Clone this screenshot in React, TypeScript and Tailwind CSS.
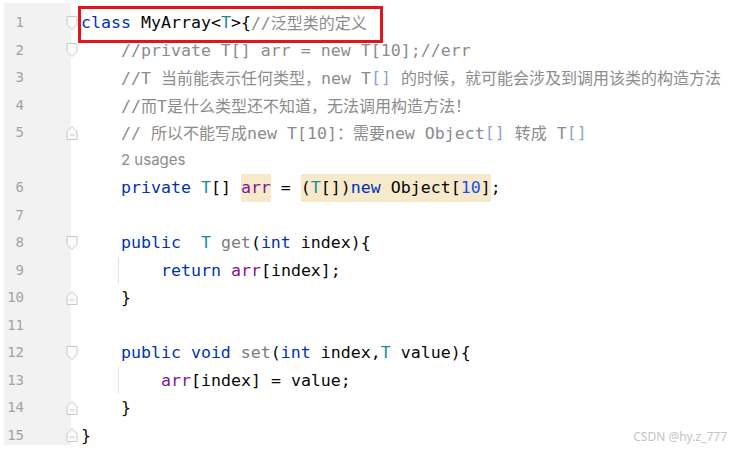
import React from "react";

type Tok = [string, string];

const K = "text-[#0033b3]";
const D = "text-[#080808]";
const TP = "text-[#1c8c99]";
const C = "text-[#8c8c8c]";
const F = "text-[#871094]";
const N = "text-[#1750eb]";
const M = "text-[#7c7c7c]";
const BR = "text-[#8ea3cf]";
const HL = "bg-[#f6eacb]";

// rows of the editor; null number = inlay row
const rows: { num: number | null; fold?: "open" | "close"; guide?: boolean; toks: Tok[] | null; usages?: boolean }[] = [
  { num: 1, fold: "open", toks: [["class ", K], ["MyArray<", D], ["T", TP], [">{", D], ["//泛型类的定义", C]] },
  { num: 2, fold: "open", toks: [["    //private T[] arr = new T[10];//err", C]] },
  { num: 3, toks: [["    //T 当前能表示任何类型，new T", C], ["[]", BR], [" 的时候，就可能会涉及到调用该类的构造方法", C]] },
  { num: 4, toks: [["    //而T是什么类型还不知道，无法调用构造方法！", C]] },
  { num: 5, fold: "close", toks: [["    // 所以不能写成new T[10]：需要new Object", C], ["[]", BR], [" 转成 T", C], ["[]", BR]] },
  { num: null, toks: null, usages: true },
  {
    num: 6,
    toks: [
      ["    ", D], ["private ", K], ["T", TP], ["[] ", D], ["arr", F + " " + HL], [" = ", D],
      ["(", D + " " + HL], ["T", TP + " " + HL], ["[])", D + " " + HL], ["new", K + " " + HL], [" Object[", D + " " + HL], ["10", N + " " + HL], ["]", D + " " + HL], [";", D],
    ],
  },
  { num: 7, toks: [] },
  { num: 8, fold: "open", toks: [["    ", D], ["public  ", K], ["T ", TP], ["get", M], ["(", D], ["int ", K], ["index){", D]] },
  { num: 9, guide: true, toks: [["return ", K], ["arr", F], ["[index];", D]] },
  { num: 10, fold: "close", toks: [["    }", D]] },
  { num: 11, toks: [] },
  { num: 12, fold: "open", toks: [["    ", D], ["public void ", K], ["set", M], ["(", D], ["int ", K], ["index,", D], ["T ", TP], ["value){", D]] },
  { num: 13, guide: true, toks: [["arr", F], ["[index] = value;", D]] },
  { num: 14, fold: "close", toks: [["    }", D]] },
  { num: 15, fold: "close", toks: [["}", D]] },
];

const Txt = ({ text }: { text: string }) => {
  const parts = text.split(/([\u3000-\u303f\u4e00-\u9fff\uff00-\uffef]+)/);
  return (
    <>
      {parts.map((p, i) =>
        i % 2 === 1 ? (
          <span key={i} className="text-[16px] font-['Noto_Sans_CJK_SC',sans-serif]">
            {p}
          </span>
        ) : (
          <React.Fragment key={i}>{p}</React.Fragment>
        )
      )}
    </>
  );
};

const Tokens = ({ toks }: { toks: Tok[] }) => (
  <>
    {toks.map(([t, c], j) => (
      <span key={j} className={"inline-block h-[27.5px] align-top leading-[27.5px] " + c}>
        <Txt text={t} />
      </span>
    ))}
  </>
);

const FoldIcon = ({ kind }: { kind: "open" | "close" }) =>
  kind === "open" ? (
    <svg width="12" height="16" viewBox="0 0 12 16">
      <path d="M1 1.5 H11 V9.5 L6 14.5 L1 9.5 Z" fill="#fbfbfb" stroke="#c8c8c8" strokeWidth="1" />
    </svg>
  ) : (
    <svg width="12" height="16" viewBox="0 0 12 16">
      <path d="M1 14.5 H11 V6.5 L6 1.5 L1 6.5 Z" fill="#fbfbfb" stroke="#c8c8c8" strokeWidth="1" />
      <path d="M3.5 10 H8.5" stroke="#c8c8c8" strokeWidth="1" />
    </svg>
  );

export default function App() {
  return (
    <div className="relative w-[739px] h-[451px] bg-white overflow-hidden">
      <div className="flex pt-[3px] pl-[4px]">
        {/* gutter with line numbers */}
        <div className="w-[67px] h-[442px] bg-[#f2f2f2] pt-[6px] pr-[47px] font-['DejaVu_Sans_Mono',monospace] text-[14px] text-[#a3a3a3]">
          {rows.map((r, i) => (
            <div key={i} className="h-[27.5px] flex items-center justify-end">
              {r.num ?? ""}
            </div>
          ))}
        </div>

        {/* fold markers */}
        <div className="w-[12px] -ml-[5px] pt-[6px]">
          {rows.map((r, i) => (
            <div key={i} className="h-[27.5px] flex items-center">
              {r.fold && <FoldIcon kind={r.fold} />}
            </div>
          ))}
        </div>

        {/* code */}
        <div className="ml-[3px] pt-[6px] font-['DejaVu_Sans_Mono',monospace] text-[16.6px] whitespace-pre">
          {rows.map((r, i) =>
            r.usages ? (
              <div key={i} className="h-[27.5px] flex items-center pl-[40px] font-['Inter',sans-serif] text-[15px] text-[#8c8c8c]">
                2 usages
              </div>
            ) : r.guide ? (
              <div key={i} className="h-[27.5px] flex">
                <div className="w-[37px]" />
                <div className="h-full border-l border-[#e2e2e2] pl-[42px]">
                  <Tokens toks={r.toks!} />
                </div>
              </div>
            ) : (
              <div key={i} className="h-[27.5px]">
                <Tokens toks={r.toks!} />
              </div>
            )
          )}
        </div>
      </div>

      {/* red annotation box */}
      <div className="absolute left-[78px] top-[6px] w-[305px] h-[37px] border-[3px] border-[#e3141b]" />

      {/* watermark */}
      <div className="absolute right-[12px] bottom-[5px] font-['Noto_Sans',sans-serif] text-[12px] text-[#c4c4c4]">
        CSDN @hy.z_777
      </div>
    </div>
  );
}
